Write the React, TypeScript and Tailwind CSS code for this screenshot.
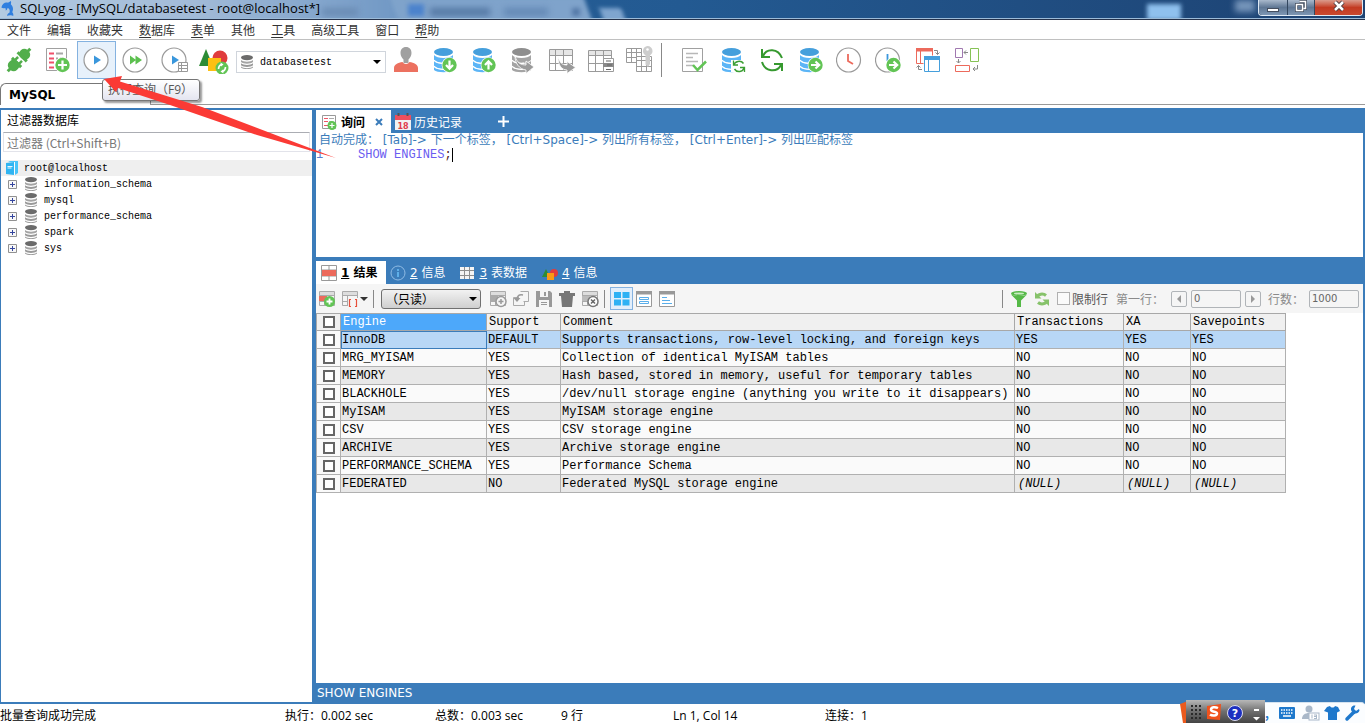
import clsx from 'clsx';
import type { ReactNode } from 'react';

const menus = [
  ['', '文件'],
  ['', '编辑'],
  ['', '收藏夹'],
  ['数', '据库'],
  ['表', '单'],
  ['', '其他'],
  ['工', '具'],
  ['', '高级工具'],
  ['', '窗口'],
  ['帮', '助'],
];

const databases = ['information_schema', 'mysql', 'performance_schema', 'spark', 'sys'];

const columns = [
  { name: 'Engine', className: 'w-[146px]' },
  { name: 'Support', className: 'w-[74px]' },
  { name: 'Comment', className: 'w-[454px]' },
  { name: 'Transactions', className: 'w-[109px]' },
  { name: 'XA', className: 'w-[67px]' },
  { name: 'Savepoints', className: 'w-[95px]' },
];

const rows = [
  ['InnoDB', 'DEFAULT', 'Supports transactions, row-level locking, and foreign keys', 'YES', 'YES', 'YES'],
  ['MRG_MYISAM', 'YES', 'Collection of identical MyISAM tables', 'NO', 'NO', 'NO'],
  ['MEMORY', 'YES', 'Hash based, stored in memory, useful for temporary tables', 'NO', 'NO', 'NO'],
  ['BLACKHOLE', 'YES', '/dev/null storage engine (anything you write to it disappears)', 'NO', 'NO', 'NO'],
  ['MyISAM', 'YES', 'MyISAM storage engine', 'NO', 'NO', 'NO'],
  ['CSV', 'YES', 'CSV storage engine', 'NO', 'NO', 'NO'],
  ['ARCHIVE', 'YES', 'Archive storage engine', 'NO', 'NO', 'NO'],
  ['PERFORMANCE_SCHEMA', 'YES', 'Performance Schema', 'NO', 'NO', 'NO'],
  ['FEDERATED', 'NO', 'Federated MySQL storage engine', null, null, null],
];

/* ---------- icons ---------- */

function Icon28({ children }: { children: ReactNode }) {
  return (
    <svg viewBox="0 0 28 28" className="size-7 shrink-0" fill="none" aria-hidden="true">
      {children}
    </svg>
  );
}

function Icon18({ children }: { children: ReactNode }) {
  return (
    <svg viewBox="0 0 18 18" className="size-[18px] shrink-0" fill="none" aria-hidden="true">
      {children}
    </svg>
  );
}

function Database({ top, body }: { top: string; body: string }) {
  return (
    <>
      <ellipse cx="12.5" cy="6" rx="9.5" ry="4" fill={top} />
      <path d="M3 9c3 4 16 4 19 0v5c-3 4-16 4-19 0z" fill={body} />
      <path d="M3 15c3 4 16 4 19 0v5c-3 4-16 4-19 0z" fill={body} />
      <path d="M3 21c3 3.500 16 3.500 19 0v3c-3 3-16 3-19 0z" fill={body} />
      <path d="M3 14.200c3 3.500 8 3.300 12 3M3 20.200c3 3.500 8 3.300 12 3" stroke="#fff" strokeWidth="1.200" />
    </>
  );
}

function Badge({ d }: { d: string }) {
  return (
    <>
      <circle cx="18.500" cy="19" r="7.800" fill="#fff" />
      <circle cx="18.500" cy="19" r="7.200" fill="#62c455" />
      <path d={d} stroke="#fff" strokeWidth="2.200" />
    </>
  );
}

function SmallDatabase() {
  return (
    <svg viewBox="0 0 12 14" className="h-[14px] w-3 shrink-0" fill="none" aria-hidden="true">
      <ellipse cx="6" cy="2.600" rx="6" ry="2.600" fill="#6b6b6b" />
      <path d="M0 5c2.500 2.300 9.500 2.300 12 0v2c-2.500 2.300-9.500 2.300-12 0z" fill="#a4a4a4" />
      <path d="M0 8.300c2.500 2.300 9.500 2.300 12 0v2c-2.500 2.300-9.500 2.300-12 0z" fill="#999" />
      <path d="M0 11.400c2.500 2.300 9.500 2.300 12 0v1.100c-2.500 2-9.500 2-12 0z" fill="#999" />
    </svg>
  );
}

const BLUE_DB = <Database top="#459fdc" body="#5cb5f6" />;

const ConnectIcon = (
  <Icon28>
    <g transform="rotate(-45 14 14)" fill="#52ae4c">
      <path d="M-2 12.500h4v3h-4zM25 12.500h5v3h-5z" />
      <rect x="1" y="8.500" width="11" height="11" rx="4.500" />
      <path d="M9 7.500h3v13H9zM12 10h3.500v2.500H12zM12 15.500h3.500V18H12z" />
      <rect x="17" y="8.500" width="10" height="11" rx="4.500" />
      <path d="M17 7.500h3v13h-3z" />
    </g>
  </Icon28>
);

const NewQueryIcon = (
  <Icon28>
    <path d="M2.500 2.500h20v22h-20z" stroke="#a0a0a0" />
    <path d="M5 7.500h5M5 12.500h5M5 16.500h5M5 21.500h5" stroke="#f0506a" strokeWidth="2" />
    <path d="M12 7.500h7M12 12.500h2M16 12.500h4" stroke="#a8a8a8" strokeWidth="2" />
    <Badge d="M14 19h9M18.500 14.500v9" />
  </Icon28>
);

const PlayIcon = (
  <Icon28>
    <circle cx="13" cy="14" r="12" fill="#fff" stroke="#9a9a9a" strokeWidth="1.200" />
    <path d="M11 9.500l7 4.500-7 4.500z" fill="#3a97dc" />
  </Icon28>
);

const PlayAllIcon = (
  <Icon28>
    <circle cx="13" cy="14" r="12" stroke="#9a9a9a" strokeWidth="1.200" />
    <path d="M8 9.500l6 4.500-6 4.500zM13.500 9.500L20 14l-6.500 4.500z" fill="#5cc04f" />
  </Icon28>
);

const PlayGridIcon = (
  <Icon28>
    <circle cx="13" cy="14" r="12" stroke="#9a9a9a" strokeWidth="1.200" />
    <path d="M11 9.500l7 4.500-7 4.500z" fill="#3a97dc" />
    <path d="M17.500 16.500h9v9h-9z" fill="#fff" stroke="#999" />
    <path d="M17.500 19.500h9M17.500 22.500h9M20.500 16.500v9" stroke="#999" />
  </Icon28>
);

const ShapesIcon = (
  <svg viewBox="0 0 32 28" className="h-7 w-8" fill="none" aria-hidden="true">
    <circle cx="22" cy="12" r="7.500" fill="#e03c3c" />
    <path d="M8 3l7 17H1z" fill="#2c8c35" />
    <path d="M10 12h13v13H10z" fill="#fdc013" />
    <circle cx="24" cy="22" r="6.500" fill="#62c455" />
    <path d="M20.500 23c0-3 1.500-4 3-4.500M27.500 21c0 3-1.500 4-3 4.500" stroke="#fff" strokeWidth="1.600" />
    <path d="M22.500 16.500l3 2-2.500 2zM25.500 27.500l-3-2 2.500-2z" fill="#fff" />
  </svg>
);

const UserIcon = (
  <Icon28>
    <path d="M14 1c3.500 0 5.500 2.500 5.500 6 0 3-1.500 5-3 6.500V17h-5v-3.500C10 12 8.500 10 8.500 7 8.500 3.500 10.500 1 14 1z" fill="#a0a0a0" />
    <path d="M2 26v-4c0-3.500 4-5.500 8.500-6 1.500 2.500 5.500 2.500 7 0 4.500.500 8.500 2.500 8.500 6v4z" fill="#ec7160" />
  </Icon28>
);

const ImportIcon = <Icon28>{BLUE_DB}<Badge d="M18.500 14.500v8M15 19l3.500 3.700L22 19" /></Icon28>;
const ExportIcon = <Icon28>{BLUE_DB}<Badge d="M18.500 23.500v-8M15 19l3.500-3.700L22 19" /></Icon28>;
const TransferIcon = <Icon28>{BLUE_DB}<Badge d="M14 19h8M18.500 15.500L22.200 19l-3.700 3.500" /></Icon28>;

const CopyDbIcon = (
  <Icon28>
    <Database top="#8e8e8e" body="#a4a4a4" />
    <path d="M6 10c2 7 6 9 11 9v-4l8 6-8 6.500V24C10 23 6 17 6 10z" fill="#9a9a9a" stroke="#fff" strokeWidth=".8" />
  </Icon28>
);

const CopyTableIcon = (
  <Icon28>
    <path d="M1.500 3.500h23v21h-23z" stroke="#9a9a9a" />
    <path d="M2 4h22v5H2z" fill="#e6e6e6" />
    <path d="M1.500 9.500h23M1.500 17.500h23M7.500 3.500v21M15.500 3.500v21" stroke="#9a9a9a" />
    <path d="M10 11c2 6 4 8 9 8v-3.500l8.500 6L19 27.500V24c-6 0-9-6-9-13z" fill="#9a9a9a" stroke="#fff" strokeWidth=".8" />
  </Icon28>
);

const TableLockIcon = (
  <Icon28>
    <path d="M1.500 4.500h23v21h-23z" stroke="#9a9a9a" />
    <path d="M2 5h22v4H2z" fill="#e6e6e6" />
    <path d="M1.500 9.500h23M1.500 17.500h23M8.500 4.500v21M16.500 4.500v21" stroke="#9a9a9a" />
    <path d="M16.500 12.500h10v13h-10z" fill="#fff" stroke="#9a9a9a" />
    <path d="M16 17h11v4H16z" fill="#8a8a8a" />
    <path d="M19 15h5M19 23.500h5M20 19h5" stroke="#666" strokeWidth="1.200" />
  </Icon28>
);

const TableKeyIcon = (
  <Icon28>
    <path d="M.500 2.500h15v14H.500zM.500 6.500h15M.500 11.500h15M5.500 2.500v14M10.500 2.500v14" stroke="#9a9a9a" />
    <path d="M10.500 10.500h15v15h-15z" fill="#fff" stroke="#9a9a9a" />
    <path d="M10.500 14.500h15M10.500 20.500h15M15.500 10.500v15M20.500 10.500v15" stroke="#9a9a9a" />
    <path d="M21.500 0a5 5 0 015 5c0 2-1 3.500-2.500 4.300V18l-2 3-2.500-2.500V9.300A5 5 0 0121.500 0z" fill="#cdcdcd" />
    <circle cx="21.500" cy="3.500" r="1.300" fill="#fff" />
  </Icon28>
);

const CheckDocIcon = (
  <Icon28>
    <path d="M2.500 2.500h20v23h-20z" stroke="#a0a0a0" />
    <path d="M6 7.500h12M6 11.500h7M6 15.500h12M6 19.500h7" stroke="#b8b8b8" strokeWidth="1.500" />
    <path d="M13 19l4.500 5L26 15.500" stroke="#62c455" strokeWidth="2.500" />
  </Icon28>
);

const SyncDbIcon = (
  <Icon28>
    {BLUE_DB}
    <path d="M12 14h14v12H12z" fill="#fff" />
    <path d="M15 19c.5-4 7-5 9.500-1.500M25 22c-1 4-7 5-9.500 1" stroke="#3c9e33" strokeWidth="1.500" />
    <path d="M14.500 14.500v4.500H19M25.500 26v-4.500H21" stroke="#3c9e33" strokeWidth="1.300" />
  </Icon28>
);

const RefreshIcon = (
  <Icon28>
    <path d="M5 10c3.500-8 15-8 19 2M23 19c-4 8-16 7-19-3" stroke="#36992f" strokeWidth="2" />
    <path d="M4 3v8h8M24 25v-7h-8" stroke="#36992f" strokeWidth="2" />
  </Icon28>
);

const ClockIcon = (
  <Icon28>
    <circle cx="12.500" cy="14" r="12" stroke="#9a9a9a" strokeWidth="1.200" />
    <path d="M12 8v7l5 3" stroke="#ec6a5c" strokeWidth="1.800" />
  </Icon28>
);

const ScheduleIcon = (
  <Icon28>
    <circle cx="12.500" cy="14" r="12" stroke="#9a9a9a" strokeWidth="1.200" />
    <path d="M12.500 8v7" stroke="#3a97dc" strokeWidth="1.800" />
    <Badge d="M14 19h8M18.500 15.500L22.200 19l-3.700 3.500" />
  </Icon28>
);

const SchemaSyncIcon = (
  <Icon28>
    <path d="M2.500 2.500h16v15h-16zM6.500 2.500v15" stroke="#ec6a5c" />
    <path d="M2 2h17v3.500H2z" fill="#ec6a5c" />
    <path d="M9.500 9.500h17v17h-17z" fill="#fff" />
    <path d="M10.500 10.500h15v15h-15zM14.500 10.500v15" stroke="#459fdc" />
    <path d="M10 10h16v4H10z" fill="#459fdc" />
    <path d="M20 4.500h3.500v4M21.500 6.500l2 2 2-2M8 23.500H4.500v-4M2.500 21.500l2-2 2 2" stroke="#888" />
  </Icon28>
);

const SchemaDesignIcon = (
  <Icon28>
    <path d="M2.500 2.500h7v9h-7z" stroke="#a078b0" />
    <path d="M17.500 2.500h8v13h-8z" stroke="#86c255" />
    <path d="M2.500 19.500h14v6h-14z" stroke="#ec6a5c" />
    <path d="M15 6.500h-4M13 4.500l-2 2 2 2M5.500 13v4M3.500 15l2 2 2-2M24.500 19v4H20M22 21l-2 2 2 2" stroke="#888" />
  </Icon28>
);

const leftTools = [
  { label: '连接', icon: ConnectIcon },
  { label: '新建查询', icon: NewQueryIcon },
  { label: '执行查询', icon: PlayIcon, active: true },
  { label: '执行所有查询', icon: PlayAllIcon },
  { label: '执行并编辑', icon: PlayGridIcon },
  { label: '可视化', icon: ShapesIcon },
];

const dbTools = [
  { label: '用户管理', icon: UserIcon },
  { label: '导入', icon: ImportIcon },
  { label: '导出', icon: ExportIcon },
  { label: '复制数据库', icon: CopyDbIcon },
  { label: '复制表', icon: CopyTableIcon },
  { label: '表属性', icon: TableLockIcon },
  { label: '索引', icon: TableKeyIcon },
];

const powerTools = [
  { label: '检查', icon: CheckDocIcon },
  { label: '同步数据库', icon: SyncDbIcon },
  { label: '刷新', icon: RefreshIcon },
  { label: '迁移', icon: TransferIcon },
  { label: '计划', icon: ClockIcon },
  { label: '计划任务', icon: ScheduleIcon },
  { label: '结构同步', icon: SchemaSyncIcon },
  { label: '架构设计', icon: SchemaDesignIcon },
];

/* ---------- window chrome ---------- */

function ToolButton({ label, icon, active }: { label: string; icon: ReactNode; active?: boolean }) {
  return (
    <button
      type="button"
      aria-label={label}
      className={clsx(
        'flex h-[38px] w-[39px] shrink-0 items-center justify-center border',
        active ? 'border-[#84b2e0] bg-[#e7f1fb]' : 'border-transparent',
      )}
    >
      {icon}
    </button>
  );
}

function TitleBar() {
  return (
    <header className="relative flex h-5 shrink-0 overflow-hidden border-b border-[#26324a] bg-linear-to-r from-[#2a639c] via-[#235a92] to-[#1d4272]">
      <div className="absolute -left-4 -top-2 h-9 w-[420px] bg-linear-to-r from-[#b4cbe2] via-[#a2bbd8] to-[#6f97c4] blur-[3px]" />
      <div className="absolute -top-1 left-[395px] h-8 w-[194px] skew-x-[20deg] bg-[#7fa3cb] blur-[2px]" />
      <div className="absolute left-[602px] top-2 h-4 w-[22px] skew-x-[20deg] bg-[#7fa5cf] blur-[2px]" />
      <div className="absolute left-[408px] top-1 h-3 w-[16px] bg-[#4c83cc] blur-[2px]" />
      <div className="absolute left-[430px] top-2 h-2 w-[60px] bg-[#5478a4] blur-[3px]" />
      <div className="absolute left-[504px] top-2 h-2 w-[44px] bg-[#6489b5] blur-[3px]" />
      <div className="absolute left-[572px] top-2 h-2 w-[8px] bg-[#557aa8] blur-[2px]" />
      <div className="absolute left-[322px] top-2 h-2 w-[36px] bg-[#6a8cb4] blur-[3px]" />
      <div className="absolute left-[1147px] top-1 h-4 w-[34px] bg-[#8fc0ee] blur-[2px]" />
      <div className="absolute left-[1235px] top-0 h-3 w-[20px] bg-[#7796bb] blur-[3px]" />
      <div className="absolute inset-x-0 bottom-0 h-px bg-[#9cbbd8]" />
      <div className="relative flex w-full items-start justify-between">
        <h1 className="flex items-center gap-1 font-['Open_Sans','Noto_Sans_CJK_SC',sans-serif] text-[13px] leading-[17px] text-black">
          <svg viewBox="0 0 16 18" className="h-[17px] w-4" aria-hidden="true">
            <path d="M1 8C2 4 5 2 8 3l3-2c.5 1.500.3 2.500 0 3.500 2.500 2 3 5.500 1.500 8.500 1 1 1.500 2.500 1 4-1-.8-2-1-3.500-.8-1.500.2-2.500.3-3 1 0-2 1-3.200 2.500-3.700C10.500 11 9.500 9 7.500 8.500c-.3 1.500-1 2.500-2 2.500C5.800 10 5.500 9 5 8.500 3.500 8.800 2 8.800 1 8z" fill="#2f7fe0" />
          </svg>
          SQLyog - [MySQL/databasetest - root@localhost*]
        </h1>
        <div className="mr-[2px] flex h-4 overflow-hidden rounded-b-[4px] border border-t-0 border-[#dfe9f4] bg-[#1d2a3d]">
          <button type="button" aria-label="最小化" className="flex w-[29px] items-end justify-center border-r border-[#33475f] bg-linear-to-b from-[#a9b9cc] via-[#5f7794] to-[#7e97b4] pb-[3px]">
            <span className="h-1 w-3 border border-[#454f60] bg-white" />
          </button>
          <button type="button" aria-label="还原" className="flex w-[27px] items-center justify-center border-r border-[#33475f] bg-linear-to-b from-[#a9b9cc] via-[#5f7794] to-[#7e97b4] pb-[3px]">
            <svg viewBox="0 0 12 12" className="size-3" fill="none" aria-hidden="true">
              <path d="M4.500 1.500h6v7h-2M1.500 4.500h6v6h-6z" stroke="#454f60" strokeWidth="3" />
              <path d="M4.500 1.500h6v7h-2M1.500 4.500h6v6h-6z" stroke="#fff" strokeWidth="1.500" />
            </svg>
          </button>
          <button type="button" aria-label="关闭" className="flex w-[47px] items-center justify-center bg-linear-to-b from-[#d99a8c] via-[#c33a22] to-[#c9492f] pb-[3px]">
            <svg viewBox="0 0 12 12" className="size-3" aria-hidden="true">
              <path d="M2 2l8 8M10 2l-8 8" stroke="#4a3a3f" strokeWidth="4.500" />
              <path d="M2 2l8 8M10 2l-8 8" stroke="#fff" strokeWidth="2.500" />
            </svg>
          </button>
        </div>
      </div>
    </header>
  );
}

function MenuBar() {
  return (
    <nav className="flex h-5 shrink-0 items-center gap-4 border-b border-[#c0c0c0] bg-white px-[7px] text-xs text-[#333]">
      {menus.map(([key, rest]) => (
        <button key={key + rest} type="button" className="leading-4">
          {key && <span className="underline underline-offset-2">{key}</span>}
          {rest}
        </button>
      ))}
    </nav>
  );
}

function Toolbar() {
  return (
    <div className="-ml-px flex h-10 shrink-0 items-center">
      {leftTools.map((tool) => (
        <ToolButton key={tool.label} {...tool} />
      ))}
      <div className="relative ml-[3px] mt-1 flex h-[22px] w-[150px] items-center border border-[#d0d5dc] bg-white pl-1">
        <SmallDatabase />
        <select
          aria-label="数据库"
          className="h-full w-full appearance-none pl-[7px] font-['Liberation_Mono','Noto_Sans_CJK_SC',monospace] text-[10px] text-black"
        >
          <option>databasetest</option>
        </select>
        <span className="pointer-events-none absolute right-1 border-x-4 border-t-4 border-x-transparent border-t-black" />
      </div>
      {dbTools.map((tool) => (
        <ToolButton key={tool.label} {...tool} />
      ))}
      <span className="ml-[2px] mr-3 h-[34px] w-px bg-[#888]" />
      {powerTools.map((tool) => (
        <ToolButton key={tool.label} {...tool} />
      ))}
    </div>
  );
}

function ConnectionTabs() {
  return (
    <div className="flex h-7 shrink-0 items-start">
      <button
        type="button"
        className="mt-[3px] h-[22px] w-[150px] rounded-tl-md border-l border-t border-[#777] pl-2 text-left font-['DejaVu_Sans',sans-serif] text-xs font-bold text-black"
      >
        MySQL
      </button>
      <span className="h-[25px] flex-1 border-b border-l border-[#999]" />
    </div>
  );
}

/* ---------- panels ---------- */

function ObjectBrowser() {
  return (
    <aside className="flex w-[311px] shrink-0 flex-col bg-white">
      <label htmlFor="db-filter" className="h-[22px] pl-[6px] text-xs leading-5 text-black">
        过滤器数据库
      </label>
      <input
        id="db-filter"
        placeholder="过滤器 (Ctrl+Shift+B)"
        className="mx-[2px] h-5 border border-[#e2e3ea] border-t-[#abadb3] px-[3px] text-xs placeholder:text-[#777]"
      />
      <ul className="mt-2 font-['Liberation_Mono','Noto_Sans_CJK_SC',monospace] text-[10px] leading-4 text-black">
        <li>
          <div className="flex h-4 items-center gap-[6px] bg-[#efefef] pl-[5px]">
            <svg viewBox="0 0 12 14" className="h-[14px] w-3" aria-hidden="true">
              <path d="M0 2l8-1v13l-8-1z" fill="#2fb4f2" />
              <path d="M2 1l2-1h8v12l-3 2V1z" fill="#49c4fa" />
              <path d="M8.500 1v13" stroke="#fff" strokeWidth=".8" />
              <path d="M1.500 5.500h5M1.500 7h4" stroke="#fff" strokeWidth=".9" />
            </svg>
            <span className="pt-[2px]">root@localhost</span>
          </div>
          <ul>
            {databases.map((name) => (
              <li key={name} className="flex h-4 items-center pl-[7px]">
                <button type="button" aria-label={`展开 ${name}`} className="mr-2">
                  <svg viewBox="0 0 9 9" className="size-[9px]" aria-hidden="true">
                    <path d="M.5.5h8v8h-8z" fill="#f8f8f8" stroke="#919191" />
                    <path d="M2 4.500h5M4.500 2v5" stroke="#34459e" />
                  </svg>
                </button>
                <SmallDatabase />
                <span className="ml-[7px] pt-[2px]">{name}</span>
              </li>
            ))}
          </ul>
        </li>
      </ul>
    </aside>
  );
}

function QueryTabs() {
  return (
    <div className="flex h-[23px] shrink-0 items-stretch text-xs text-white">
      <button type="button" className="flex w-[75px] items-center bg-white pl-1 font-bold text-black">
        <Icon18>
          <path d="M2.500 2.500h13v13h-13z" stroke="#999" />
          <path d="M4 5.500h4M4 8.500h4M4 12.500h4" stroke="#ee5566" />
          <path d="M9 5.500h5M9 8.500h3" stroke="#aaa" />
          <circle cx="12" cy="12.500" r="4.500" fill="#62c455" />
          <path d="M9.500 12.500h5M12 10v5" stroke="#fff" strokeWidth="1.200" />
        </Icon18>
        <span className="ml-[3px]">询问</span>
        <svg viewBox="0 0 8 8" className="ml-[10px] size-2" aria-hidden="true">
          <path d="M1 1l6 6M7 1L1 7" stroke="#3b7cba" strokeWidth="2" />
        </svg>
      </button>
      <button type="button" className="flex items-center pl-[3px]">
        <Icon18>
          <path d="M1 2h16v15H1z" fill="#f2f2f2" />
          <path d="M1 2h16v5H1z" fill="#ee4f5d" />
          <path d="M4.500 0v3M13.500 0v3" stroke="#555" strokeWidth="2" />
          <text x="9" y="15.500" textAnchor="middle" fontSize="8" fontWeight="bold" fill="#e03c4c" fontFamily="DejaVu Sans">
            18
          </text>
        </Icon18>
        <span className="ml-[2px]">历史记录</span>
      </button>
      <button type="button" aria-label="新标签" className="ml-[36px] flex items-center">
        <svg viewBox="0 0 11 11" className="size-[11px]" aria-hidden="true">
          <path d="M0 5.500h11M5.500 0v11" stroke="#fff" strokeWidth="2" />
        </svg>
      </button>
    </div>
  );
}

function QueryEditor() {
  return (
    <section className="flex h-[124px] shrink-0 flex-col bg-white">
      <p className="h-[14px] whitespace-nowrap pl-[3px] font-['DejaVu_Sans','Noto_Sans_CJK_SC',sans-serif] text-xs leading-[14px] text-[#3b7cba]">
        自动完成： [Tab]-&gt; 下一个标签， [Ctrl+Space]-&gt; 列出所有标签， [Ctrl+Enter]-&gt; 列出匹配标签
      </p>
      <div className="flex flex-1 font-['Liberation_Mono',monospace] text-xs leading-4">
        <span className="w-[42px] text-[#5a7fd0]">1</span>
        <div className="grid flex-1">
          <pre className="col-start-1 row-start-1 font-[inherit] text-[#6a5cf0]" aria-hidden="true">
            SHOW ENGINES<span className="border-r border-black text-[#502020]">;</span>
          </pre>
          <textarea
            aria-label="查询"
            defaultValue="SHOW ENGINES;"
            spellCheck={false}
            className="col-start-1 row-start-1 resize-none bg-transparent text-transparent outline-none"
          />
        </div>
      </div>
    </section>
  );
}

function TabText({ index, children }: { index: number; children: ReactNode }) {
  return (
    <span className="ml-[3px] font-['DejaVu_Sans','Noto_Sans_CJK_SC',sans-serif]">
      <u>{index}</u> {children}
    </span>
  );
}

function ResultTabs() {
  return (
    <div className="flex h-[27px] shrink-0 items-stretch pt-1 text-xs text-white">
      <button type="button" className="flex w-[70px] items-center bg-white pl-1 font-bold text-black">
        <Icon18>
          <path d="M1.500 1.500h15v15h-15zM9 1.500v15M1.500 6h15M1.500 12h15" fill="#fff" stroke="#999" />
          <path d="M2 6h14v6H2z" fill="#ec6a5c" />
        </Icon18>
        <TabText index={1}>结果</TabText>
      </button>
      <button type="button" className="flex items-center pl-[3px]">
        <Icon18>
          <circle cx="9" cy="9" r="7" stroke="#8fbbe4" />
          <path d="M9 8v5M9 5v2" stroke="#6cc0f8" strokeWidth="1.500" />
        </Icon18>
        <TabText index={2}>信息</TabText>
      </button>
      <button type="button" className="flex items-center pl-[13px]">
        <Icon18>
          <path d="M2 3h14v12H2z" fill="#f4f4f4" />
          <path d="M6.500 3v12M11.500 3v12M2 6.500h14M2 11.500h14" stroke="#8e8e8e" />
        </Icon18>
        <TabText index={3}>表数据</TabText>
      </button>
      <button type="button" className="flex items-center pl-[14px]">
        <Icon18>
          <circle cx="13" cy="9" r="4" fill="#e03c3c" />
          <path d="M5 5l4 8H1z" fill="#2c8c35" />
          <path d="M6 9h7v7H6z" fill="#fa9a14" />
        </Icon18>
        <TabText index={4}>信息</TabText>
      </button>
    </div>
  );
}

const GRAY_GRID = (
  <>
    <path d="M1.500 1.500h15v14h-15zM1.500 5.500h15M1.500 11.500h15M6.500 1.500v14M11.500 1.500v4" stroke="#aaa" />
    <path d="M2 2h14v3H2z" fill="#ddd" />
  </>
);

const editTools = [
  {
    label: '插入行',
    icon: (
      <Icon18>
        {GRAY_GRID}
        <path d="M1 6h8v5H1z" fill="#aaa" />
        <circle cx="12" cy="11.500" r="5" fill="#f5f5f5" stroke="#999" strokeWidth="1.500" />
        <path d="M9.500 11.500h5M12 9v5" stroke="#999" strokeWidth="1.500" />
      </Icon18>
    ),
  },
  {
    label: '复制行',
    icon: (
      <Icon18>
        <path d="M8.500 1.500h8v10h-5M7 7.500H1.500v8h11v-4" stroke="#aaa" />
        <path d="M5 10c0-4 2-6 6-5" stroke="#999" strokeWidth="1.500" />
        <path d="M1.500 8l3.500 4 3.500-4z" fill="#999" />
      </Icon18>
    ),
  },
  {
    label: '保存',
    icon: (
      <Icon18>
        <path d="M1 1h14l2 2v14H1z" fill="#999" />
        <path d="M5 1h8v6H5zM4 10h10v7H4z" fill="#f5f5f5" />
        <path d="M9 2h2v4H9zM6 12h6v1H6zM6 14h6v1H6z" fill="#999" />
      </Icon18>
    ),
  },
  {
    label: '删除',
    icon: (
      <Icon18>
        <path d="M1 3h5V1h6v2h5v3H1zM3 6h12l-1 11H4z" fill="#777" />
      </Icon18>
    ),
  },
  {
    label: '取消',
    icon: (
      <Icon18>
        {GRAY_GRID}
        <path d="M1 6h8v5H1z" fill="#bbb" />
        <circle cx="12" cy="11.500" r="5" fill="#fff" stroke="#777" strokeWidth="1.500" />
        <path d="M10 9.500l4 4M14 9.500l-4 4" stroke="#666" strokeWidth="1.500" />
      </Icon18>
    ),
  },
];

function Separator({ className }: { className?: string }) {
  return <span className={clsx('h-[18px] w-px shrink-0 bg-[#888]', className)} />;
}

function ResultToolbar() {
  return (
    <div className="flex h-[29px] shrink-0 items-center bg-[#f5f5f5] text-xs">
      <button type="button" aria-label="新增" className="ml-[2px]">
        <Icon18>
          {GRAY_GRID}
          <path d="M1 6h8v5H1z" fill="#ec6a5c" />
          <circle cx="11.500" cy="11.500" r="5.500" fill="#62c455" />
          <path d="M8.500 11.500h6M11.500 8.500v6" stroke="#fff" strokeWidth="1.800" />
        </Icon18>
      </button>
      <button type="button" aria-label="复制选项" className="ml-[5px] flex items-center gap-px">
        <Icon18>
          {GRAY_GRID}
          <path d="M7 8h10v10H7z" fill="#f5f5f5" />
          <path d="M10 9.500H8.500v7H10M14 9.500h1.500v7H14" stroke="#e8503c" strokeWidth="1.200" />
        </Icon18>
        <span className="border-x-4 border-t-4 border-x-transparent border-t-[#333]" />
      </button>
      <Separator className="ml-[5px]" />
      <div className="relative ml-[7px] flex h-5 w-[100px] items-center">
        <select
          aria-label="编辑模式"
          className="h-full w-full appearance-none rounded-[3px] border border-[#707070] bg-linear-to-b from-[#f2f2f2] to-[#cfcfcf] pl-1 text-xs text-black"
        >
          <option>（只读）</option>
        </select>
        <span className="pointer-events-none absolute right-1 border-x-4 border-t-4 border-x-transparent border-t-black" />
      </div>
      <div className="ml-2 flex gap-[5px]">
        {editTools.map((tool) => (
          <button key={tool.label} type="button" aria-label={tool.label}>
            {tool.icon}
          </button>
        ))}
      </div>
      <Separator className="ml-[5px]" />
      <button
        type="button"
        aria-label="网格视图"
        className="ml-[5px] flex size-[23px] items-center justify-center border border-[#84b2e0] bg-[#e2eefb]"
      >
        <Icon18>
          <path d="M1 2h7v6H1zM9.500 2h7v6h-7zM1 9.500h7v6H1zM9.500 9.500h7v6h-7z" fill="#2fb1f4" />
        </Icon18>
      </button>
      <button type="button" aria-label="表单视图" className="ml-[2px]">
        <Icon18>
          <path d="M1.500 1.500h15v15h-15z" fill="#fff" stroke="#999" />
          <path d="M1 1h16v3.500H1z" fill="#999" />
          <path d="M4.500 7.500h9v2h-9zM4.500 11.500h9v2h-9z" stroke="#5aaeea" />
        </Icon18>
      </button>
      <button type="button" aria-label="文本视图" className="ml-[5px]">
        <Icon18>
          <path d="M1.500 1.500h15v15h-15z" fill="#fff" stroke="#999" />
          <path d="M1 1h16v3.500H1z" fill="#999" />
          <path d="M4 7.500h5M4 10.500h8M4 13.500h10" stroke="#5aaeea" />
        </Icon18>
      </button>

      <div className="ml-auto flex items-center pr-1 text-[#8a8a8a]">
        <Separator />
        <button type="button" aria-label="过滤" className="ml-[7px]">
          <Icon18>
            <ellipse cx="9" cy="3.500" rx="8" ry="2.500" fill="#55b947" />
            <path d="M1 4.500l6 6V17h4v-6.500l6-6c-4 2-12 2-16 0z" fill="#55b947" />
            <ellipse cx="9" cy="3.500" rx="5" ry="1" fill="#c8ecc2" />
          </Icon18>
        </button>
        <button type="button" aria-label="刷新" className="ml-[5px]">
          <Icon18>
            <path d="M4 7c1-3 6-4 9-1.500M14 11c-1 3-6 4-9 1.500" stroke="#86c26a" strokeWidth="3" />
            <path d="M2 2v6.500h6.500zM16 16V9.500H9.500z" fill="#86c26a" />
          </Icon18>
        </button>
        <label className="ml-[6px] flex items-center gap-[2px] text-[#555]">
          <input type="checkbox" className="size-[13px] appearance-none border border-[#b0b0b0] bg-[#fafafa]" />
          限制行
        </label>
        <label htmlFor="first-row" className="ml-2">
          第一行：
        </label>
        <button type="button" aria-label="上一页" className="ml-[7px] flex size-4 items-center justify-center rounded-[2px] border border-[#b0b4b8]">
          <span className="border-y-4 border-r-4 border-y-transparent border-r-[#999]" />
        </button>
        <input
          id="first-row"
          defaultValue="0"
          className="ml-1 h-[18px] w-[50px] rounded-[2px] border border-[#b0b4b8] bg-[#f5f5f5] px-[2px] font-['DejaVu_Sans',sans-serif] text-[10px] text-[#666]"
        />
        <button type="button" aria-label="下一页" className="ml-1 flex size-4 items-center justify-center rounded-[2px] border border-[#b0b4b8]">
          <span className="border-y-4 border-l-4 border-y-transparent border-l-[#999]" />
        </button>
        <label htmlFor="row-count" className="ml-[7px]">
          行数：
        </label>
        <input
          id="row-count"
          defaultValue="1000"
          className="ml-[5px] h-[18px] w-[50px] rounded-[2px] border border-[#b0b4b8] bg-[#f5f5f5] px-[2px] font-['DejaVu_Sans',sans-serif] text-[10px] text-[#666]"
        />
      </div>
    </div>
  );
}

function RowCheckbox({ label }: { label: string }) {
  return (
    <input
      type="checkbox"
      aria-label={label}
      className="mx-auto block size-3 appearance-none border-2 border-[#666] bg-white"
    />
  );
}

function ResultGrid() {
  return (
    <div className="min-h-0 flex-1 overflow-hidden bg-white">
      <table className="w-[970px] table-fixed border-collapse whitespace-nowrap font-['Liberation_Mono',monospace] text-xs leading-4 text-black">
        <thead>
          <tr className="h-[17px] bg-[#f0f0f0]">
            <th className="w-6 border border-[#a8a8a8] p-0">
              <RowCheckbox label="全选" />
            </th>
            {columns.map((column, i) => (
              <th
                key={column.name}
                className={clsx(
                  'border border-[#a8a8a8] p-0 pl-[2px] text-left font-normal',
                  column.className,
                  i === 0 && 'bg-[#4da8fa] text-white',
                )}
              >
                {column.name}
              </th>
            ))}
          </tr>
        </thead>
        <tbody>
          {rows.map((row, r) => (
            <tr
              key={row[0]}
              className={clsx('h-[18px]', r === 0 ? 'bg-[#b8d7f6]' : r % 2 ? 'bg-[#fafafa]' : 'bg-[#e8e8e8]')}
            >
              <td className="border border-[#b0b0b0] bg-[#fafafa] p-0">
                <RowCheckbox label={`选择 ${row[0]}`} />
              </td>
              {row.map((cell, c) => (
                <td
                  key={columns[c].name}
                  className={clsx(
                    'border border-[#b0b0b0] p-0 pl-px pt-px',
                    r === 0 && c === 0 && 'outline -outline-offset-1 outline-[#3b7cba]',
                  )}
                >
                  {cell ?? <i className="pl-[2px]">(NULL)</i>}
                </td>
              ))}
            </tr>
          ))}
        </tbody>
      </table>
    </div>
  );
}

function StatusBar() {
  return (
    <footer className="flex h-[19px] shrink-0 items-center whitespace-nowrap bg-white pt-1 font-['Open_Sans','Noto_Sans_CJK_SC',sans-serif] text-xs leading-4 text-black">
      <span className="w-[285px]">批量查询成功完成</span>
      <span className="w-[150px]">执行：0.002 sec</span>
      <span className="w-[126px]">总数：0.003 sec</span>
      <span className="w-[112px]">9 行</span>
      <span className="w-[152px]">Ln 1, Col 14</span>
      <span>连接：1</span>
    </footer>
  );
}

function InputMethodBar() {
  return (
    <div className="absolute bottom-0 right-0 flex h-[23px] items-end">
      <svg viewBox="0 0 85 23" className="h-[23px] w-[85px]" aria-hidden="true">
        <defs>
          <linearGradient id="ime" x1="0" y1="0" x2="0" y2="1">
            <stop offset="0" stopColor="#b8b8b8" />
            <stop offset=".5" stopColor="#6e6e6e" />
            <stop offset="1" stopColor="#444" />
          </linearGradient>
        </defs>
        <path d="M0 4l8-3v22H3z" fill="#ea5a1e" />
        <path d="M6 0h79v23H6z" fill="url(#ime)" />
        <path d="M12 5v16M16 5v16M20 5v16" stroke="#2a2a2a" strokeWidth="2" strokeDasharray="2 2" />
        <path d="M27 6l14-2-1 16-13-1z" fill="#f0521c" />
        <path d="M38 8c-3-1.500-7-1-7 1.500 0 3 6 1.500 6 4 0 2.500-5 2.500-7 1" fill="none" stroke="#fff" strokeWidth="2.500" />
        <circle cx="55" cy="13" r="7.500" fill="#1c2fc0" stroke="#dde" />
        <text x="55" y="17" fill="#fff" fontSize="11" fontWeight="bold" textAnchor="middle" fontFamily="DejaVu Sans">
          ?
        </text>
        <path d="M74 9h5v2h-5zM73 17h7l-3.500 3.500z" fill="#fff" />
      </svg>
      <div className="flex h-[21px] w-[100px] items-center rounded-tr border-t border-[#d5e3f0] bg-[#fbfdff] text-[#1e78cc]">
        <span className="w-[14px] text-xs font-bold leading-none">,</span>
        <svg viewBox="0 0 86 18" className="h-[18px] w-[86px]" aria-hidden="true">
          <rect x="0" y="3" width="16" height="12" rx="1" fill="#1e78cc" />
          <path d="M2 6h12M2 9h12" stroke="#fff" strokeWidth="1.500" strokeDasharray="1.500 1" />
          <path d="M4 12h8" stroke="#fff" strokeWidth="1.500" />
          <circle cx="30" cy="5" r="3.500" fill="#a9b8c9" />
          <path d="M23 15c0-4 3-6 7-6s6 2 6 6z" fill="#a9b8c9" />
          <rect x="30" y="9" width="10" height="7" fill="#fff" stroke="#a9b8c9" />
          <path d="M33 10.500v4M35 11h3M35 12.500h3M35 14.500h3M37.500 11v4" stroke="#a9b8c9" />
          <path d="M48 3l3-1c1 2 4 2 5 0l3 1 2 4-3 1.500V16h-9V8.500L45 7z" fill="#1e78cc" />
          <path d="M68 15l7-7" stroke="#1e78cc" strokeWidth="3.500" strokeLinecap="round" />
          <path d="M80 5l-3 2-2-2 1.500-3.500C73 1 71 4 72.500 7c2 3.500 7 3 8-.5z" fill="#1e78cc" />
        </svg>
      </div>
    </div>
  );
}

export default function App() {
  return (
    <div className="relative flex h-screen flex-col overflow-hidden bg-white font-['Noto_Sans_CJK_SC',sans-serif]">
      <TitleBar />
      <MenuBar />
      <Toolbar />
      <ConnectionTabs />
      <main className="flex min-h-0 flex-1 gap-1 bg-[#3b7cba] pl-px pr-[2px] pt-[2px]">
        <div className="flex pb-[2px]">
          <ObjectBrowser />
        </div>
        <div className="flex min-w-0 flex-1 flex-col">
          <QueryTabs />
          <QueryEditor />
          <ResultTabs />
          <ResultToolbar />
          <ResultGrid />
          <p className="h-[21px] shrink-0 pl-px font-['DejaVu_Sans',sans-serif] text-xs leading-5 text-white">
            SHOW ENGINES
          </p>
        </div>
      </main>
      <StatusBar />
      <InputMethodBar />

      <div
        role="tooltip"
        className="absolute left-[102px] top-[79px] h-[22px] w-[98px] rounded-[3px] border border-[#767676] bg-linear-to-b from-white to-[#e4e5f0] pl-[5px] font-['Open_Sans','Noto_Sans_CJK_SC',sans-serif] text-xs leading-[19px] text-[#575757] shadow-[2px_2px_2px_#0006]"
      >
        执行查询（F9）
      </div>
      <svg viewBox="0 0 240 90" className="pointer-events-none absolute left-[100px] top-[72px] h-[90px] w-[240px]" aria-hidden="true">
        <path d="M4 7l18-3-2 5.500L102 35l134 51-79-23-87-30-52-17-2 4z" fill="#fb3a35" />
      </svg>
    </div>
  );
}
